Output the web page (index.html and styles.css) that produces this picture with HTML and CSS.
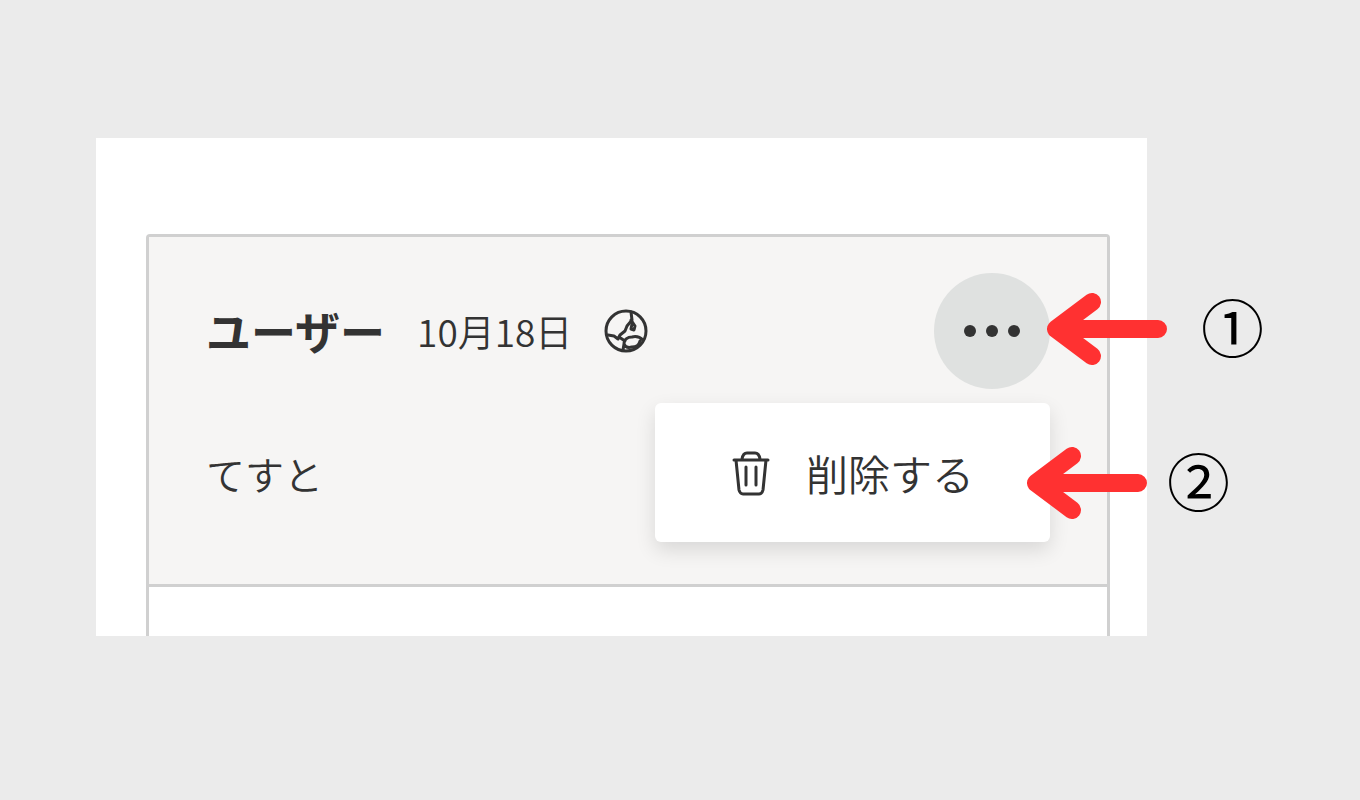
FILE: index.html
```html
<!doctype html>
<html lang="ja">
<head>
    <meta charset="UTF-8">
    <meta name="viewport" content="width=device-width, initial-scale=1.0">
    <title>コメントの削除</title>
    <link rel="stylesheet" href="styles.css">
</head>
<body>
    <div class="stage">
        <div class="panel">
            <div class="card">
                <div class="comment">
                    <div class="head">
                        <strong class="name">ユーザー</strong>
                        <span class="date">10月18日</span>
                        <svg class="globe" viewBox="0 0 44 44" aria-hidden="true">
                            <circle cx="22" cy="22" r="20"/>
                            <path d="M27 3l1 8-5 6-2 5-5 4-2 4-4-3-6-1"/>
                            <path d="M27 11l4 6-1 4-3-1 1-5"/>
                            <path d="M15 28l6 4M20 35c0-5 4-7 8-7 4-1 8 0 11 3M20 35c1 3 4 4 8 3 4 0 7-2 8-6M20 35l-1 6"/>
                        </svg>
                        <button class="more" type="button" aria-label="その他">
                            <i></i><i></i><i></i>
                        </button>
                        <div class="menu">
                            <button class="delete" type="button">
                                <svg class="trash" viewBox="0 0 38 46" aria-hidden="true">
                                    <path d="M2 10h34M4 10l3 30q1 4 4 4h16q3 0 4-4l3-30M10 9q1-6 5-6h8q4 0 5 6M14 17v18M24 17v18"/>
                                </svg>
                                <span>削除する</span>
                            </button>
                        </div>
                    </div>
                    <p class="text">てすと</p>
                </div>
                <div class="next"></div>
            </div>
            <div class="callout first">
                <svg class="arrow" viewBox="0 0 120 74" aria-hidden="true"><path d="M111 37H9M45 10L9 37l36 27"/></svg>
                <span class="num">①</span>
            </div>
            <div class="callout second">
                <svg class="arrow" viewBox="0 0 120 74" aria-hidden="true"><path d="M111 37H9M45 10L9 37l36 27"/></svg>
                <span class="num">②</span>
            </div>
        </div>
    </div>
</body>
</html>
```
FILE: styles.css
```css
*{
    margin:0;
    padding:0;
    box-sizing:border-box;
}
body{
    background:#ebebeb;
    color:#333;
    font-family:"Noto Sans CJK JP",sans-serif;
}
button{
    border:0;
    color:inherit;
    font-family:inherit;
    cursor:pointer;
}
svg{
    fill:none;
    stroke:#333;
    stroke-width:3;
    stroke-linecap:round;
    stroke-linejoin:round;
    flex:none;
}
.stage{
    padding:138px 213px 138px 96px;
}
.panel{
    position:relative;
    padding:96px 37px 0 50px;
    background:#fff;
}
.card{
    border:3px solid #d0d0d0;
    border-bottom:0;
    border-radius:4px 4px 0 0;
}
.comment{
    padding:36px 57px 81px;
    background:#f6f5f4;
    border-bottom:3px solid #d0d0d0;
}
.head{
    position:relative;
    display:flex;
    align-items:center;
}
.name{
    font-size:45px;
    line-height:60px;
}
.date{
    margin-left:32px;
    font-size:37px;
    line-height:60px;
    font-weight:350;
}
.globe{
    width:44px;
    height:44px;
    margin-left:32px;
}
.more{
    display:flex;
    align-items:center;
    justify-content:center;
    gap:10px;
    width:116px;
    height:116px;
    margin-left:auto;
    border-radius:50%;
    background:#dfe1e0;
}
.more i{
    width:12px;
    height:12px;
    border-radius:50%;
    background:#333;
}
.menu{
    position:absolute;
    top:130px;
    right:0;
    width:395px;
    border-radius:6px;
    background:#fff;
    box-shadow:0 8px 20px rgba(0,0,0,.12);
}
.delete{
    display:flex;
    align-items:center;
    gap:36px;
    width:100%;
    padding:40px 0 39px 77px;
    background:none;
    font-size:42px;
    line-height:60px;
    font-weight:350;
    white-space:nowrap;
}
.trash{
    width:38px;
    height:46px;
}
.text{
    margin-top:54px;
    font-size:39px;
    line-height:60px;
    font-weight:350;
}
.next{
    height:49px;
}
.callout{
    position:absolute;
    display:flex;
    align-items:flex-start;
}
.first{
    top:154px;
    left:calc(100% - 100px);
    gap:34px;
}
.second{
    top:308px;
    left:calc(100% - 120px);
    gap:20px;
}
.arrow{
    width:120px;
    height:74px;
    stroke:#ff3131;
    stroke-width:18;
}
.num{
    color:#000;
    font-size:63px;
    line-height:66px;
}
```
